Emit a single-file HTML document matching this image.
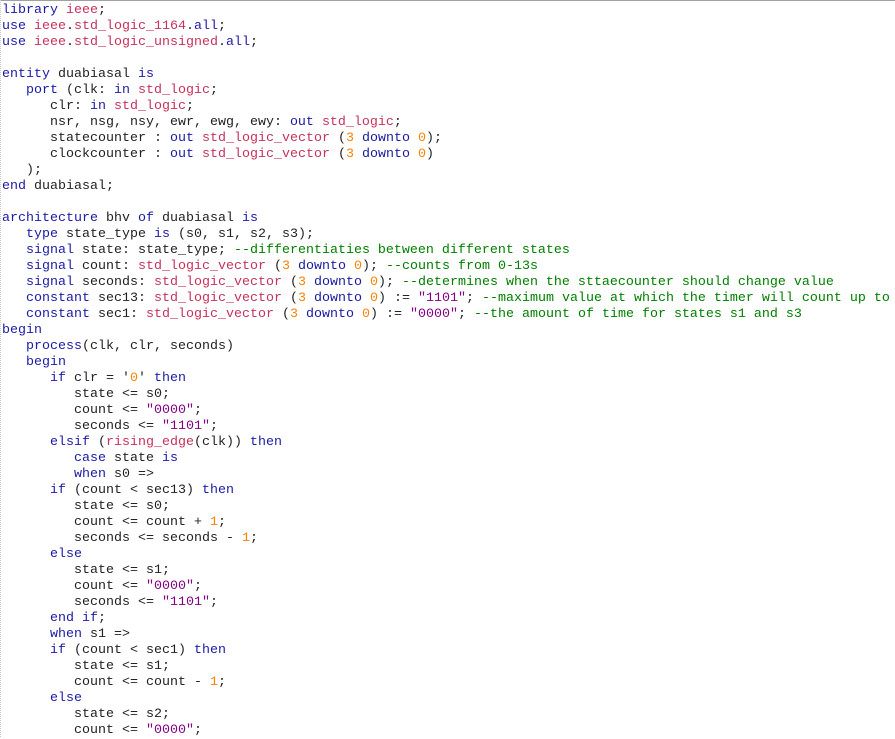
<!DOCTYPE html>
<html><head><meta charset="utf-8"><style>
html,body{margin:0;padding:0;background:#fff;}
body{width:895px;height:737px;overflow:hidden;position:relative;}
#top{position:absolute;left:0;top:0;width:895px;height:1px;background:#a0a0a0;}
#left{position:absolute;left:0;top:0;width:1px;height:737px;border-left:1px dotted #c8c8c8;}
pre{margin:0;position:absolute;left:2px;top:3px;font-family:"Liberation Mono","Courier New",monospace;font-size:13.33px;line-height:16px;color:#222;}
.k{color:#1a1aa6}.t{color:#c8325a}.n{color:#ff8000}.s{color:#800080}.c{color:#008000}
</style></head><body><div id="top"></div><div id="left"></div>
<pre><span class="k">library</span> <span class="t">ieee</span>;
<span class="k">use</span> <span class="t">ieee</span>.<span class="t">std_logic_1164</span>.<span class="k">all</span>;
<span class="k">use</span> <span class="t">ieee</span>.<span class="t">std_logic_unsigned</span>.<span class="k">all</span>;

<span class="k">entity</span> duabiasal <span class="k">is</span>
   <span class="k">port</span> (clk: <span class="k">in</span> <span class="t">std_logic</span>;
      clr: <span class="k">in</span> <span class="t">std_logic</span>;
      nsr, nsg, nsy, ewr, ewg, ewy: <span class="k">out</span> <span class="t">std_logic</span>;
      statecounter : <span class="k">out</span> <span class="t">std_logic_vector</span> (<span class="n">3</span> <span class="k">downto</span> <span class="n">0</span>);
      clockcounter : <span class="k">out</span> <span class="t">std_logic_vector</span> (<span class="n">3</span> <span class="k">downto</span> <span class="n">0</span>)
   );
<span class="k">end</span> duabiasal;

<span class="k">architecture</span> bhv <span class="k">of</span> duabiasal <span class="k">is</span>
   <span class="k">type</span> state_type <span class="k">is</span> (s0, s1, s2, s3);
   <span class="k">signal</span> state: state_type; <span class="c">--differentiaties between different states</span>
   <span class="k">signal</span> count: <span class="t">std_logic_vector</span> (<span class="n">3</span> <span class="k">downto</span> <span class="n">0</span>); <span class="c">--counts from 0-13s</span>
   <span class="k">signal</span> seconds: <span class="t">std_logic_vector</span> (<span class="n">3</span> <span class="k">downto</span> <span class="n">0</span>); <span class="c">--determines when the sttaecounter should change value</span>
   <span class="k">constant</span> sec13: <span class="t">std_logic_vector</span> (<span class="n">3</span> <span class="k">downto</span> <span class="n">0</span>) := <span class="s">"1101"</span>; <span class="c">--maximum value at which the timer will count up to</span>
   <span class="k">constant</span> sec1: <span class="t">std_logic_vector</span> (<span class="n">3</span> <span class="k">downto</span> <span class="n">0</span>) := <span class="s">"0000"</span>; <span class="c">--the amount of time for states s1 and s3</span>
<span class="k">begin</span>
   <span class="k">process</span>(clk, clr, seconds)
   <span class="k">begin</span>
      <span class="k">if</span> clr = '<span class="n">0</span>' <span class="k">then</span>
         state &lt;= s0;
         count &lt;= <span class="s">"0000"</span>;
         seconds &lt;= <span class="s">"1101"</span>;
      <span class="k">elsif</span> (<span class="t">rising_edge</span>(clk)) <span class="k">then</span>
         <span class="k">case</span> state <span class="k">is</span>
         <span class="k">when</span> s0 =&gt;
      <span class="k">if</span> (count &lt; sec13) <span class="k">then</span>
         state &lt;= s0;
         count &lt;= count + <span class="n">1</span>;
         seconds &lt;= seconds - <span class="n">1</span>;
      <span class="k">else</span>
         state &lt;= s1;
         count &lt;= <span class="s">"0000"</span>;
         seconds &lt;= <span class="s">"1101"</span>;
      <span class="k">end</span> <span class="k">if</span>;
      <span class="k">when</span> s1 =&gt;
      <span class="k">if</span> (count &lt; sec1) <span class="k">then</span>
         state &lt;= s1;
         count &lt;= count - <span class="n">1</span>;
      <span class="k">else</span>
         state &lt;= s2;
         count &lt;= <span class="s">"0000"</span>;
</pre></body></html>
